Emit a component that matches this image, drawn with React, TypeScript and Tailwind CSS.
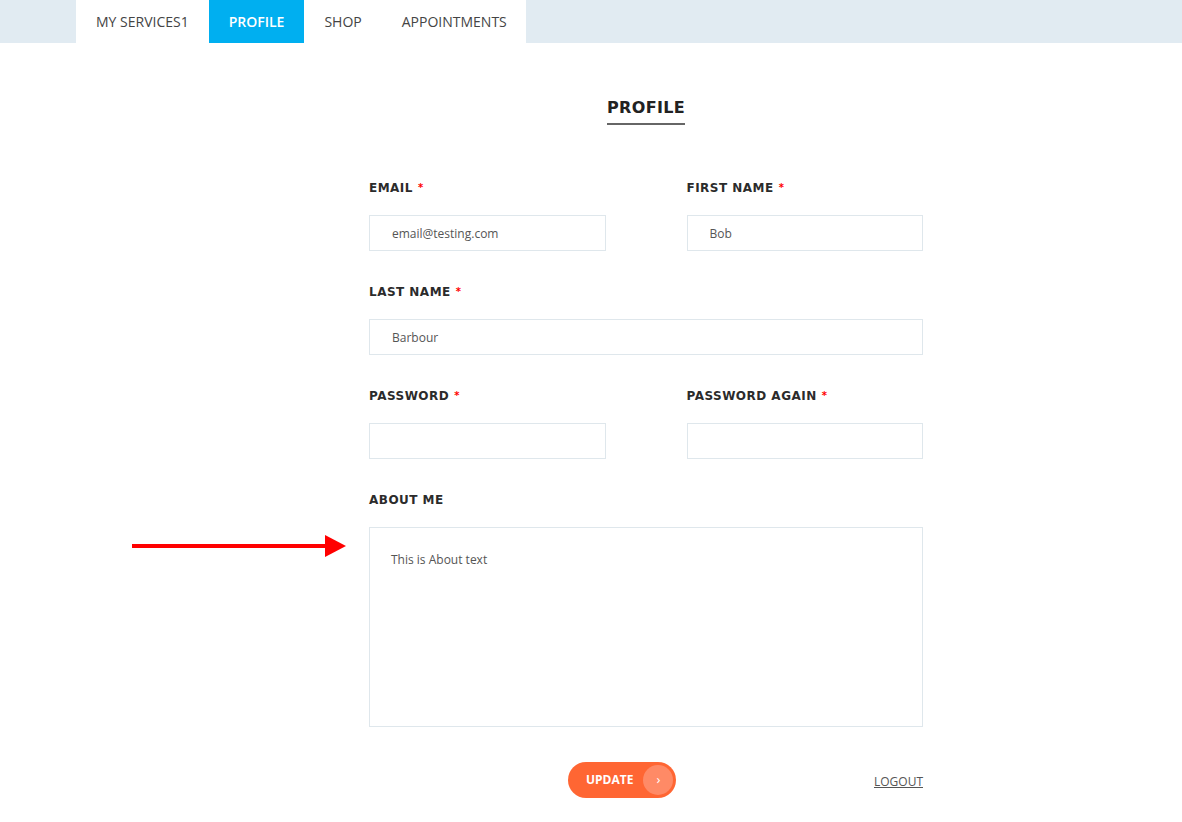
import { useState } from "react";

const tabs = ["MY SERVICES1", "PROFILE", "SHOP", "APPOINTMENTS"];

function Label({ children, required = true }: { children: string; required?: boolean }) {
  return (
    <label className="block h-[14px] whitespace-nowrap text-[12px] leading-[14px] font-bold tracking-[0.04em] text-[#2b2b2b] [font-family:'DejaVu_Sans',sans-serif]">
      {children}
      {required && <span className="ml-[5px] align-top text-[10px] text-[#ff0000]">*</span>}
    </label>
  );
}

function Field({ label, value, required = true }: { label: string; value: string; required?: boolean }) {
  return (
    <div className="flex flex-col">
      <Label required={required}>{label}</Label>
      <input
        className="mt-[20px] h-[36px] w-full border border-[#dfe7ec] bg-white px-[22px] text-[12px] text-[#555] outline-none"
        defaultValue={value}
      />
    </div>
  );
}

export default function App() {
  const [active] = useState("PROFILE");

  return (
    <div className="min-h-[822px] bg-white [font-family:'Open_Sans',sans-serif]">
      <nav className="h-[43px] bg-[#e1ebf2] pl-[76px]">
        <ul className="flex h-full w-[450px] bg-white">
          {tabs.map((t) => (
            <li
              key={t}
              className={[
                "flex h-full items-center whitespace-nowrap px-5 text-[14px]",
                t === active ? "bg-[#00aff0] font-semibold text-white" : "text-[#444]",
              ].join(" ")}
            >
              {t}
            </li>
          ))}
        </ul>
      </nav>

      <div className="relative ml-[369px] w-[554px] pt-[55px]">
        <h1 className="mx-auto w-fit border-b-2 border-[#666] pb-[5px] text-center text-[16px] leading-[20px] font-bold tracking-[0.02em] text-[#222] [font-family:'DejaVu_Sans',sans-serif]">
          PROFILE
        </h1>

        <form className="mt-[56px] flex flex-col gap-[34px]">
          <div className="grid grid-cols-2 gap-x-[81px]">
            <Field label="EMAIL" value="email@testing.com" />
            <Field label="FIRST NAME" value="Bob" />
          </div>
          <Field label="LAST NAME" value="Barbour" />
          <div className="grid grid-cols-2 gap-x-[81px]">
            <Field label="PASSWORD" value="" />
            <Field label="PASSWORD AGAIN" value="" />
          </div>
          <div className="relative flex flex-col">
            <Label required={false}>ABOUT ME</Label>
            <textarea
              className="mt-[20px] h-[200px] w-full resize-none border border-[#dfe7ec] px-[21px] pt-[23px] text-[12px] text-[#555] outline-none"
              defaultValue="This is About text"
            />
            <svg
              className="absolute left-[-237px] top-[41px]"
              width="214"
              height="24"
              viewBox="0 0 214 24"
            >
              <rect x="0" y="10" width="196" height="4" fill="#ff0000" />
              <polygon points="193,1 214,12 193,23" fill="#ff0000" />
            </svg>
          </div>

          <div className="relative mt-[1px] flex h-[36px] items-center pl-[199px]">
            <button
              type="button"
              className="flex h-[36px] items-center gap-[10px] rounded-full bg-[#ff6633] pl-[18px] pr-[3px] text-[12px] font-bold text-white"
            >
              UPDATE
              <span className="flex h-[30px] w-[30px] items-center justify-center rounded-full bg-[#ff8a66] text-[13px] font-normal">
                ›
              </span>
            </button>
            <a className="absolute right-0 top-[11px] text-[12px] text-[#555] underline">LOGOUT</a>
          </div>
        </form>
      </div>
    </div>
  );
}
